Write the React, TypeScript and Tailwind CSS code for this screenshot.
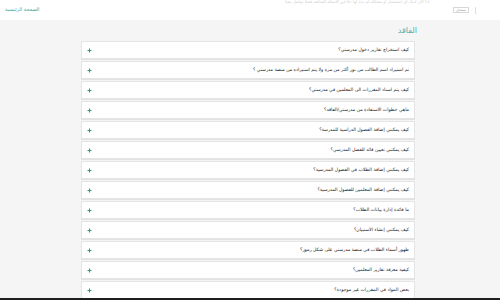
const QUESTIONS = [
  "كيف استخراج تقارير دخول مدرستي؟",
  "تم استيراد اسم الطالب من نور أكثر من مرة ولا يتم استيراده من منصة مدرستي ؟",
  "كيف يتم اسناد المقررات الى المعلمين في مدرستي؟",
  "ماهي خطوات الاستفادة من مدرستي/الفاقد؟",
  "كيف يمكنني إضافة الفصول الدراسية للمدرسة؟",
  "كيف يمكنني تعيين قائد للفصل المدرسي؟",
  "كيف يمكنني إضافة الطلاب في الفصول المدرسية؟",
  "كيف يمكنني إضافة المعلمين للفصول المدرسية؟",
  "ما فائدة إدارة بيانات الطلاب؟",
  "كيف يمكنني إنشاء الاستبيان؟",
  "ظهور أسماء الطلاب في منصة مدرستي على شكل رموز؟",
  "كيفية معرفة تقارير المعلمين؟",
  "بعض المواد في المقررات غير موجودة؟",
];

export default function App() {
  return (
    <main className="min-h-[300px] w-full bg-[#f5f5f5] font-['DejaVu_Sans',sans-serif] relative overflow-hidden">
      <Header />

      <section className="w-[334px] ml-[81px] pt-[5px]">
        <h2 dir="rtl" className="text-[8px] leading-[12px] text-[#4fb0b0] -mr-[2px]">الفاقد</h2>
        <div className="flex flex-col gap-[2px] mt-[4px]">
          {QUESTIONS.map((q) => <Question key={q} text={q} />)}
        </div>
      </section>

      <div className="fixed bottom-0 left-0 w-full h-[2px] bg-[#1f1f1f]" />
    </main>
  );
}

function Header() {
  return (
    <header className="w-full h-[20px] bg-white flex items-center justify-between relative">
      <span className="pl-[5px] text-[5px] text-[#3aa5a0]">الصفحة الرئيسية</span>
      <p dir="rtl" className="absolute top-0 left-[285px] text-[4px] leading-[4px] text-[#cfcfcf] whitespace-nowrap">
        اذا كان لديك اي استفسار او مشكلة لم تجد لها حلا في الاسئلة الشائعة فضلا تواصل معنا
      </p>
      <div className="flex items-center gap-[6px] pr-[24px]">
        <span className="border border-[#d8d8d8] px-[2px] text-[3.5px] leading-[4px] text-[#999]">تسجيل</span>
        <span className="w-px h-[7px] bg-[#ddd]" />
      </div>
    </header>
  );
}

function Question({ text }: { text: string }) {
  return (
    <div className="h-[18px] bg-white border border-[#e4e4e4] shadow-[0_1px_0_#e2e2e2] flex items-center justify-between pl-[5px] pr-[5px]">
      <svg width="5" height="5" viewBox="0 0 5 5" className="shrink-0">
        <path d="M2.5 0.5v4M0.5 2.5h4" stroke="#2f9a88" strokeWidth="1.1" />
      </svg>
      <span dir="rtl" className="text-[4.6px] text-[#222] whitespace-nowrap">{text}</span>
    </div>
  );
}
